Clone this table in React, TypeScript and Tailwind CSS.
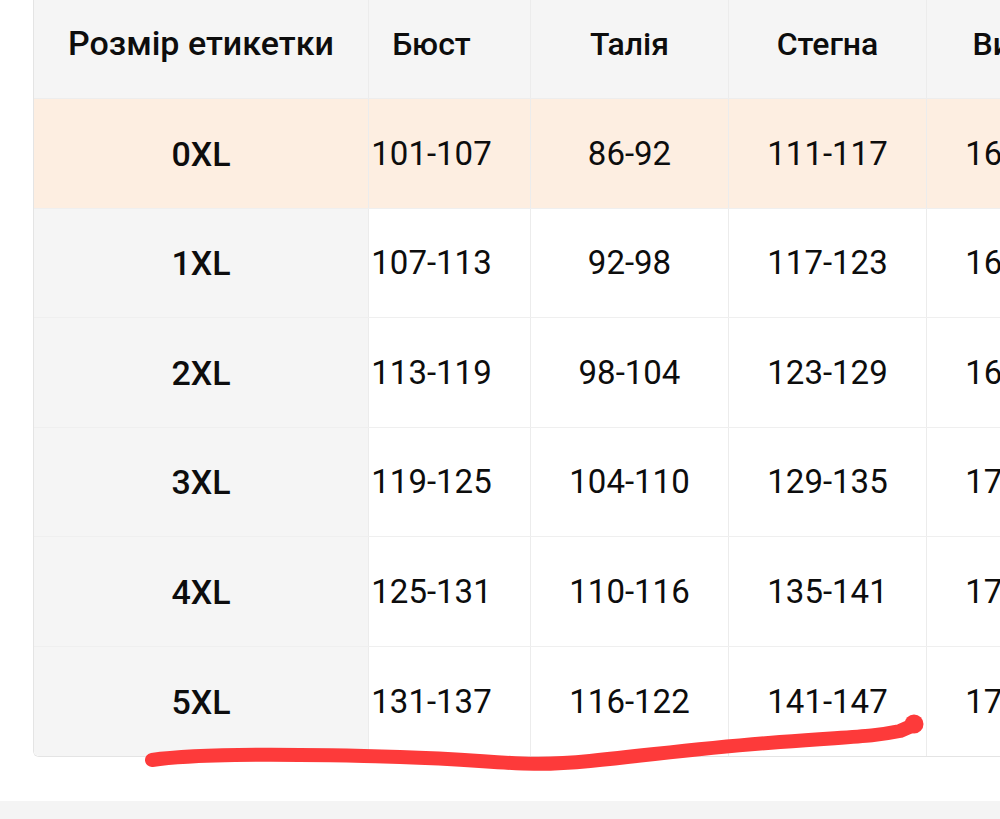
const headers = ['Розмір етикетки', 'Бюст', 'Талія', 'Стегна', 'Висота']

const rows = [
  ['0XL', '101-107', '86-92', '111-117', '160-165'],
  ['1XL', '107-113', '92-98', '117-123', '163-168'],
  ['2XL', '113-119', '98-104', '123-129', '165-170'],
  ['3XL', '119-125', '104-110', '129-135', '170-175'],
  ['4XL', '125-131', '110-116', '135-141', '172-177'],
  ['5XL', '131-137', '116-122', '141-147', '175-180'],
]

const cols = 'grid grid-cols-[335px_162px_198px_198px_198px]'

export default function App() {
  return (
    <div className="relative w-[1000px] h-[819px] overflow-hidden bg-white text-[#0d0d0d] font-['Roboto',sans-serif]">
      <div className="ml-[33px] -mt-[11px] w-[1091px] border-l border-b border-[#e4e4e4] rounded-bl-[6px] overflow-hidden">
        <div className={cols + ' h-[110px] bg-[#f5f5f5] border-b border-[#ededed] font-medium'}>
          {headers.map((h, i) => (
            <div
              key={h}
              className={
                'flex items-center justify-center border-r border-[#ececec] whitespace-nowrap ' +
                (i === 0 ? 'text-[34px]' : 'text-[32px]') +
                (i === 1 ? ' pr-[36px]' : '')
              }
            >
              {h}
            </div>
          ))}
        </div>
        {rows.map((r, ri) => (
          <div
            key={r[0]}
            className={
              cols +
              ' h-[109.5px] ' +
              (ri === 0 ? 'bg-[#fdeee1]' : 'bg-white') +
              (ri < rows.length - 1 ? ' border-b border-[#efefef]' : '')
            }
          >
            {r.map((v, i) => (
              <div
                key={i}
                className={
                  'flex items-center justify-center border-r border-[#ececec] whitespace-nowrap ' +
                  (i === 0 ? 'text-[34px] font-medium pt-[2px]' : 'text-[33px] font-normal') +
                  (i === 0 && ri > 0 ? ' bg-[#f5f5f5]' : '') +
                  (i === 1 ? ' pr-[36px]' : '')
                }
              >
                {v}
              </div>
            ))}
          </div>
        ))}
      </div>
      <div className="h-[44px]" />
      <div className="h-[30px] bg-[#f4f4f4]" />

      <svg className="absolute inset-0 pointer-events-none" width="1000" height="819" viewBox="0 0 1000 819">
        <path
          d="M152 760 C 200 753, 300 754, 400 757 S 520 768, 590 761 S 700 748, 780 742 S 870 737, 900 731 L 916 724"
          fill="none"
          stroke="#fd3a3a"
          strokeWidth="14"
          strokeLinecap="round"
          strokeLinejoin="round"
        />
        <circle cx="914" cy="724" r="9.5" fill="#fd3a3a" />
      </svg>
    </div>
  )
}
